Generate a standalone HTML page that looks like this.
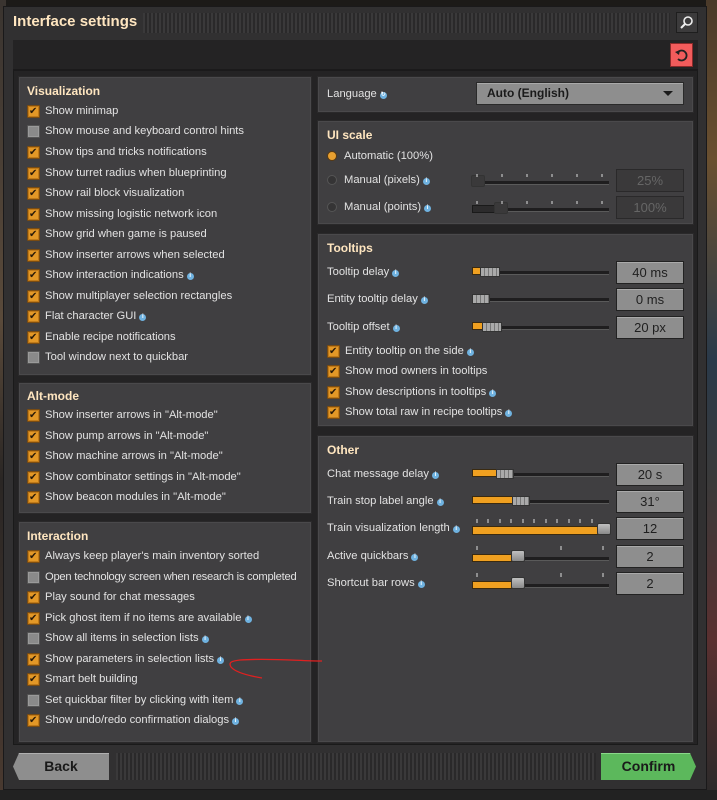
<!DOCTYPE html><html><head><meta charset="utf-8"><style>
*{box-sizing:border-box;margin:0;padding:0}
body{width:717px;height:800px;overflow:hidden;background:#1c1a18;font-family:"Liberation Sans",sans-serif;position:relative}
.a{position:absolute}
.bgl{left:0;top:0;width:6px;height:800px;background:linear-gradient(#3a3430,#5a4a3a 40%,#2a2624 60%,#4a3a30)}
.bgr{left:706px;top:0;width:11px;height:800px;background:linear-gradient(#4a3a2a,#6a5030 20%,#2a3a4a 45%,#3a3a3a 60%,#5a3030 80%,#2a2a2a)}
.bgb{left:0;top:790px;width:717px;height:10px;background:#222}
.win{left:3px;top:6px;width:704px;height:784px;background:#313031;border:1px solid #1a191a}
.title{left:13px;top:13px;font-size:15px;font-weight:bold;color:#ffe6c0}
.grip{background:repeating-linear-gradient(90deg,#3a393a 0 2px,#2a292a 2px 4px)}
.inner{left:13px;top:40px;width:685px;height:705px;background:#242324;border:1px solid #1a1a1a}
.sub{left:13px;top:40px;width:685px;height:31px;background:#242324;border-bottom:2px solid #1b1a1b}
.p{background:#403f41;border:1px solid #2a292a;box-shadow:inset 0 0 0 1px #4a494b}
.h{font-size:12px;font-weight:bold;color:#ffe6c0}
.t{font-size:11.2px;color:#e2e2e2;white-space:nowrap;height:14px;line-height:14px}
.cb{position:absolute;width:13px;height:13px;border-radius:1px}
.on{background:#e39827;border:1px solid #7a4c12;box-shadow:inset 0 0 0 1px #c07a18}
.on:after{content:"✔";position:absolute;left:1px;top:-1px;font-size:10px;color:#2a1a08}
.off{background:#8a8a8a;border:1px solid #555;box-shadow:inset 0 0 0 1px #9a9a9a}
.i{display:inline-block;width:7px;height:7px;border-radius:50%;background:#6fb2e0;margin-left:3px;vertical-align:1px;font-size:6px;line-height:7px;text-align:center;color:#fff;font-weight:bold}
.tr{height:4px;background:#1f1e1f;border-bottom:1px solid #5a5a5a}
.fill{height:8px;background:#f0a020;border:1px solid #3a2a10}
.th{width:14px;height:12px;background:linear-gradient(#c0c0c0,#8a8a8a);border:1px solid #333;border-radius:2px}
.th2{width:30px;height:10px;background:repeating-linear-gradient(90deg,#aaa 0 3px,#777 3px 4px);border:1px solid #333}
.vb{width:68px;height:23px;background:#8e8e8e;border:1px solid #222;box-shadow:inset 0 1px 0 #aaa;font-size:13px;color:#1f1f1f;text-align:center;line-height:21px}
.vd{background:#3a393a;color:#666;box-shadow:none;border-color:#2a292a}
.rd{position:absolute;width:10px;height:10px;border-radius:50%;background:#353435;border:1px solid #555}
.btn{height:27px;font-size:14px;font-weight:bold;color:#1a1a1a;line-height:27px;text-align:center}
</style></head><body>
<div class="a bgl"></div><div class="a bgr"></div><div class="a bgb"></div>
<div class="a win"></div>
<div class="a title">Interface settings</div>
<div class="a grip" style="left:143px;top:13px;width:527px;height:20px"></div>
<div class="a" style="left:676px;top:12px;width:22px;height:21px;background:#3c3b3c;border:1px solid #1e1e1e"><svg width="20" height="19"><circle cx="11" cy="8" r="4" fill="none" stroke="#eee" stroke-width="1.6"/><line x1="8" y1="11" x2="4" y2="15" stroke="#eee" stroke-width="2"/></svg></div>
<div class="a inner"></div>
<div class="a sub"></div>
<div class="a" style="left:670px;top:43px;width:23px;height:24px;background:#f25c5c;border:1px solid #8a2a2a"><svg width="21" height="22"><path d="M7 8 A5 5 0 1 1 7 15" fill="none" stroke="#222" stroke-width="1.8"/><path d="M4 8 L9 6 L8 11 Z" fill="#222"/></svg></div>

<div class="a p" style="left:18px;top:76px;width:294px;height:300px"></div>
<div class="a p" style="left:18px;top:382px;width:294px;height:132px"></div>
<div class="a p" style="left:18px;top:521px;width:294px;height:222px"></div>
<div class="a p" style="left:317px;top:76px;width:377px;height:37px"></div>
<div class="a p" style="left:317px;top:120px;width:377px;height:105px"></div>
<div class="a p" style="left:317px;top:233px;width:377px;height:194px"></div>
<div class="a p" style="left:317px;top:435px;width:377px;height:308px"></div>

<div class="a h" style="left:27px;top:84px">Visualization</div>
<div class="a t" style="left:27px;top:104px"><span class="cb on" style="left:0;top:1px"></span><span style="margin-left:18px">Show minimap</span></div>
<div class="a t" style="left:27px;top:124px"><span class="cb off" style="left:0;top:1px"></span><span style="margin-left:18px">Show mouse and keyboard control hints</span></div>
<div class="a t" style="left:27px;top:145px"><span class="cb on" style="left:0;top:1px"></span><span style="margin-left:18px">Show tips and tricks notifications</span></div>
<div class="a t" style="left:27px;top:166px"><span class="cb on" style="left:0;top:1px"></span><span style="margin-left:18px">Show turret radius when blueprinting</span></div>
<div class="a t" style="left:27px;top:186px"><span class="cb on" style="left:0;top:1px"></span><span style="margin-left:18px">Show rail block visualization</span></div>
<div class="a t" style="left:27px;top:207px"><span class="cb on" style="left:0;top:1px"></span><span style="margin-left:18px">Show missing logistic network icon</span></div>
<div class="a t" style="left:27px;top:227px"><span class="cb on" style="left:0;top:1px"></span><span style="margin-left:18px">Show grid when game is paused</span></div>
<div class="a t" style="left:27px;top:248px"><span class="cb on" style="left:0;top:1px"></span><span style="margin-left:18px">Show inserter arrows when selected</span></div>
<div class="a t" style="left:27px;top:268px"><span class="cb on" style="left:0;top:1px"></span><span style="margin-left:18px">Show interaction indications</span><span class="i">i</span></div>
<div class="a t" style="left:27px;top:289px"><span class="cb on" style="left:0;top:1px"></span><span style="margin-left:18px">Show multiplayer selection rectangles</span></div>
<div class="a t" style="left:27px;top:309px"><span class="cb on" style="left:0;top:1px"></span><span style="margin-left:18px">Flat character GUI</span><span class="i">i</span></div>
<div class="a t" style="left:27px;top:330px"><span class="cb on" style="left:0;top:1px"></span><span style="margin-left:18px">Enable recipe notifications</span></div>
<div class="a t" style="left:27px;top:350px"><span class="cb off" style="left:0;top:1px"></span><span style="margin-left:18px">Tool window next to quickbar</span></div>

<div class="a h" style="left:27px;top:389px">Alt-mode</div>
<div class="a t" style="left:27px;top:408px"><span class="cb on" style="left:0;top:1px"></span><span style="margin-left:18px">Show inserter arrows in "Alt-mode"</span></div>
<div class="a t" style="left:27px;top:429px"><span class="cb on" style="left:0;top:1px"></span><span style="margin-left:18px">Show pump arrows in "Alt-mode"</span></div>
<div class="a t" style="left:27px;top:449px"><span class="cb on" style="left:0;top:1px"></span><span style="margin-left:18px">Show machine arrows in "Alt-mode"</span></div>
<div class="a t" style="left:27px;top:470px"><span class="cb on" style="left:0;top:1px"></span><span style="margin-left:18px">Show combinator settings in "Alt-mode"</span></div>
<div class="a t" style="left:27px;top:490px"><span class="cb on" style="left:0;top:1px"></span><span style="margin-left:18px">Show beacon modules in "Alt-mode"</span></div>

<div class="a h" style="left:27px;top:529px">Interaction</div>
<div class="a t" style="left:27px;top:549px"><span class="cb on" style="left:0;top:1px"></span><span style="margin-left:18px">Always keep player's main inventory sorted</span></div>
<div class="a t" style="left:27px;top:570px"><span class="cb off" style="left:0;top:1px"></span><span style="margin-left:18px;letter-spacing:-0.25px">Open technology screen when research is completed</span></div>
<div class="a t" style="left:27px;top:590px"><span class="cb on" style="left:0;top:1px"></span><span style="margin-left:18px">Play sound for chat messages</span></div>
<div class="a t" style="left:27px;top:611px"><span class="cb on" style="left:0;top:1px"></span><span style="margin-left:18px">Pick ghost item if no items are available</span><span class="i">i</span></div>
<div class="a t" style="left:27px;top:631px"><span class="cb off" style="left:0;top:1px"></span><span style="margin-left:18px">Show all items in selection lists</span><span class="i">i</span></div>
<div class="a t" style="left:27px;top:652px"><span class="cb on" style="left:0;top:1px"></span><span style="margin-left:18px">Show parameters in selection lists</span><span class="i">i</span></div>
<div class="a t" style="left:27px;top:672px"><span class="cb on" style="left:0;top:1px"></span><span style="margin-left:18px">Smart belt building</span></div>
<div class="a t" style="left:27px;top:693px"><span class="cb off" style="left:0;top:1px"></span><span style="margin-left:18px">Set quickbar filter by clicking with item</span><span class="i">i</span></div>
<div class="a t" style="left:27px;top:713px"><span class="cb on" style="left:0;top:1px"></span><span style="margin-left:18px">Show undo/redo confirmation dialogs</span><span class="i">i</span></div>

<div class="a t" style="left:327px;top:87px">Language<span class="i">↻</span></div>
<div class="a" style="left:476px;top:82px;width:208px;height:23px;background:#8e8e8e;border:1px solid #2a2a2a;box-shadow:inset 0 1px 0 #aaa;font-size:12px;font-weight:bold;color:#1a1a1a;line-height:21px;padding-left:10px">Auto (English)<span style="position:absolute;right:10px;top:8px;border:5px solid transparent;border-top:5px solid #1a1a1a;border-bottom:0;width:0;height:0"></span></div>

<div class="a h" style="left:327px;top:128px">UI scale</div>
<div class="rd" style="left:327px;top:151px;background:#e8a030;border-color:#5a3a10"></div>
<div class="a t" style="left:344px;top:149px">Automatic (100%)</div>
<div class="rd" style="left:327px;top:175px"></div>
<div class="a t" style="left:344px;top:173px">Manual (pixels)<span class="i">i</span></div>
<div class="rd" style="left:327px;top:202px"></div>
<div class="a t" style="left:344px;top:200px">Manual (points)<span class="i">i</span></div>
<div class="a tr" style="left:472px;top:181px;width:137px"></div>
<div class="a th" style="left:471px;top:175px;background:#3a393a"></div>
<div class="a tr" style="left:472px;top:208px;width:137px"></div>
<div class="a" style="left:472px;top:205px;width:30px;height:8px;background:#2c2b2c;border:1px solid #1a1a1a"></div>
<div class="a th" style="left:494px;top:202px;background:#3a393a"></div>
<div class="a vb vd" style="left:616px;top:169px">25%</div>
<div class="a vb vd" style="left:616px;top:196px">100%</div>

<div class="a h" style="left:327px;top:241px">Tooltips</div>
<div class="a t" style="left:327px;top:265px">Tooltip delay<span class="i">i</span></div>
<div class="a t" style="left:327px;top:292px">Entity tooltip delay<span class="i">i</span></div>
<div class="a t" style="left:327px;top:320px">Tooltip offset<span class="i">i</span></div>
<div class="a tr" style="left:472px;top:271px;width:137px"></div>
<div class="a fill" style="left:472px;top:267px;width:10px"></div>
<div class="a th2" style="left:480px;top:267px;width:20px"></div>
<div class="a tr" style="left:472px;top:298px;width:137px"></div>
<div class="a th2" style="left:472px;top:294px;width:18px"></div>
<div class="a tr" style="left:472px;top:326px;width:137px"></div>
<div class="a fill" style="left:472px;top:322px;width:12px"></div>
<div class="a th2" style="left:482px;top:322px;width:20px"></div>
<div class="a vb" style="left:616px;top:261px">40 ms</div>
<div class="a vb" style="left:616px;top:288px">0 ms</div>
<div class="a vb" style="left:616px;top:316px">20 px</div>
<div class="a t" style="left:327px;top:344px"><span class="cb on" style="left:0;top:1px"></span><span style="margin-left:18px">Entity tooltip on the side</span><span class="i">i</span></div>
<div class="a t" style="left:327px;top:364px"><span class="cb on" style="left:0;top:1px"></span><span style="margin-left:18px">Show mod owners in tooltips</span></div>
<div class="a t" style="left:327px;top:385px"><span class="cb on" style="left:0;top:1px"></span><span style="margin-left:18px">Show descriptions in tooltips</span><span class="i">i</span></div>
<div class="a t" style="left:327px;top:405px"><span class="cb on" style="left:0;top:1px"></span><span style="margin-left:18px">Show total raw in recipe tooltips</span><span class="i">i</span></div>

<div class="a h" style="left:327px;top:443px">Other</div>
<div class="a t" style="left:327px;top:467px">Chat message delay<span class="i">i</span></div>
<div class="a t" style="left:327px;top:494px">Train stop label angle<span class="i">i</span></div>
<div class="a t" style="left:327px;top:521px">Train visualization length<span class="i">i</span></div>
<div class="a t" style="left:327px;top:549px">Active quickbars<span class="i">i</span></div>
<div class="a t" style="left:327px;top:576px">Shortcut bar rows<span class="i">i</span></div>
<div class="a tr" style="left:472px;top:473px;width:137px"></div>
<div class="a fill" style="left:472px;top:469px;width:26px"></div>
<div class="a th2" style="left:496px;top:469px;width:18px"></div>
<div class="a tr" style="left:472px;top:500px;width:137px"></div>
<div class="a fill" style="left:472px;top:496px;width:42px"></div>
<div class="a th2" style="left:512px;top:496px;width:18px"></div>
<div class="a fill" style="left:472px;top:526px;width:131px;height:9px"></div>
<div class="a th" style="left:597px;top:523px"></div>
<div class="a tr" style="left:472px;top:557px;width:137px"></div>
<div class="a fill" style="left:472px;top:554px;width:44px"></div>
<div class="a th" style="left:511px;top:550px"></div>
<div class="a tr" style="left:472px;top:584px;width:137px"></div>
<div class="a fill" style="left:472px;top:581px;width:44px"></div>
<div class="a th" style="left:511px;top:577px"></div>
<div class="a vb" style="left:616px;top:463px">20 s</div>
<div class="a vb" style="left:616px;top:490px">31°</div>
<div class="a vb" style="left:616px;top:517px">12</div>
<div class="a vb" style="left:616px;top:545px">2</div>
<div class="a vb" style="left:616px;top:572px">2</div>
<svg class="a" style="left:0;top:0" width="717" height="800">
<g stroke="#ddd" stroke-width="1">
<path d="M477 145v3M502 145v3M527 145v3M552 145v3M577 145v3M602 145v3" transform="translate(0,29)"/>
<path d="M477 145v3M502 145v3M527 145v3M552 145v3M577 145v3M602 145v3" transform="translate(0,56)"/>
<path d="M477 519v4M488 519v4M500 519v4M511 519v4M523 519v4M534 519v4M546 519v4M557 519v4M569 519v4M580 519v4M592 519v4"/>
<path d="M477 546v4M561 546v4M603 546v4M477 573v4M561 573v4M603 573v4"/>
</g>
<path d="M322 661 C300 661 270 658 240 660 C232 661 228 662 231 667 C236 673 250 676 262 678" fill="none" stroke="#e02020" stroke-width="1.3"/>
</svg>

<div class="a grip" style="left:116px;top:753px;width:480px;height:27px"></div>
<div class="a btn" style="left:13px;top:753px;width:96px;background:#8e8e8e;clip-path:polygon(6px 0,100% 0,100% 100%,6px 100%,0 50%);box-shadow:inset 0 1px 0 #b0b0b0">Back</div>
<div class="a btn" style="left:601px;top:753px;width:95px;background:#5cb85c;clip-path:polygon(0 0,calc(100% - 6px) 0,100% 50%,calc(100% - 6px) 100%,0 100%);box-shadow:inset 0 1px 0 #8ad88a">Confirm</div>
</body></html>
